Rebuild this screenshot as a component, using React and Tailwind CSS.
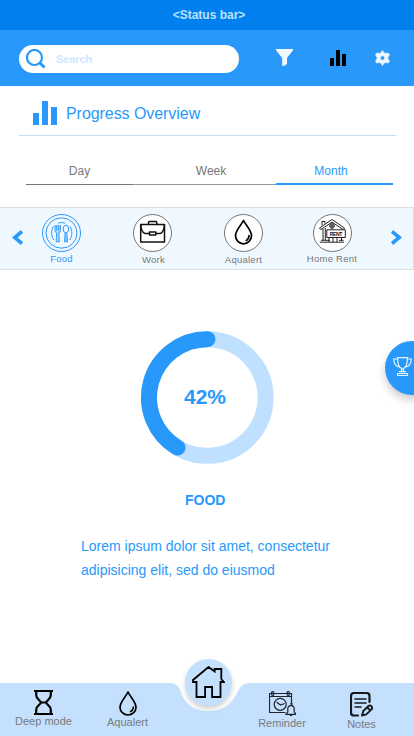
import React from "react";

function BarsIcon({ className }) {
  return (
    <svg className={className} viewBox="0 0 8 8" fill="currentColor" shapeRendering="crispEdges">
      <path d="M0 4h2v4H0zM3 0h2v8H3zM6 2h2v6H6z" />
    </svg>
  );
}

function DropIcon({ className }) {
  return (
    <svg className={className} viewBox="0 0 18 25" fill="none" stroke="#000" strokeWidth="1.700" strokeLinecap="round" strokeLinejoin="round">
      <path d="M9 1C7 5.500 1 11 1 16.200a8 7.800 0 0 0 16 0C17 11 11 5.500 9 1Z" />
      <path d="M14.400 16c-.1 2.300-1.200 3.800-3 4.700" strokeWidth="1.500" />
    </svg>
  );
}

function FoodIcon() {
  return (
    <svg className="h-[38px] w-[39px]" viewBox="0 0 39 38" fill="none" stroke="#2899fb">
      <ellipse cx="19.500" cy="19" rx="19" ry="18.500" />
      <ellipse cx="19.500" cy="19" rx="15.500" ry="15.200" />
      <path d="M11.500 12.500c-2.600 4-2.500 10 .6 13.500M28 12.500c2.600 4 2.500 10-.6 13.500M16 9.200c2.300-.8 4.700-.8 7 0" />
      <path d="M13 11v5.500q0 2 1.700 2.500l-.6 8.800h3.300l-.6-8.800q1.700-.5 1.700-2.500V11M14.800 11v5.500M16.700 11v5.500" fill="#a9d6fd" strokeWidth=".9" />
      <ellipse cx="23.900" cy="15" rx="2.700" ry="3.800" fill="#f0f8ff" />
      <path d="M23.200 18.800l-.8 9h3.200l-.9-9" fill="#8bc8fd" strokeWidth=".9" />
    </svg>
  );
}

function Disc({ children }) {
  return (
    <svg className="h-[38px] w-[39px]" viewBox="0 0 39 38" fill="none">
      <ellipse cx="19.500" cy="19" rx="19" ry="18.500" fill="#fff" stroke="#666" strokeWidth=".9" />
      {children}
    </svg>
  );
}

const WorkArt = (
  <g stroke="#111" strokeWidth="1.500" strokeLinejoin="round">
    <path d="M7.700 10.500h23.800v17.600H7.700zM15.500 10.500V8.600q0-1 1-1h6.300q1 0 1 1v1.900" />
    <path d="M7.700 10.800c.5 5.500 1.800 8.200 4.300 8.700h4.500M31.500 10.800c-.5 5.500-1.800 8.200-4.300 8.700h-4.500" />
    <path d="M16.500 17.900h6.300v3.200h-6.300z" />
  </g>
);

const DropArt = (
  <g stroke="#000" strokeWidth="1.700" strokeLinecap="round" strokeLinejoin="round">
    <path d="M19.500 6.500c-2 4.300-8 9.500-8 15.300a8 8 0 0 0 16 0c0-5.800-6-11-8-15.300Z" />
    <path d="M25 21.700c-.1 2.200-1.100 3.800-2.800 4.700" />
  </g>
);

const RentArt = (
  <g stroke="#222" strokeWidth="1">
    <path d="M6.500 14 19 5.500 31.500 14l-1.200 1.600L19 8.200 7.700 15.600ZM10 15V26M12.300 14V26M28.500 24v3M7 28.200h24M8 26.300h9M16 24v4M20 24v4M24 24v4M26 26.300h4.500M9 11.500V7.500h3v2" />
    <circle cx="19" cy="12" r="2.300" />
    <path d="M19 9.700v4.600M16.700 12h4.600" />
    <path d="M13.800 15.800h18.500v7.700H13.800z" fill="#fff" />
    <text x="23.050" y="21.500" textAnchor="middle" textLength="12.500" fontSize="5" fontWeight="700" fill="#111" stroke="none" fontFamily="Liberation Sans, sans-serif">RENT</text>
  </g>
);

function Category({ label, children, className, labelClass }) {
  return (
    <button className={`flex shrink-0 flex-col items-center ${className}`}>
      {children}
      <span className={`whitespace-nowrap text-[9.5px] leading-[12px] tracking-[0.25px] ${labelClass}`}>{label}</span>
    </button>
  );
}

function NavItem({ label, className, children }) {
  return (
    <button className={`flex shrink-0 flex-col items-center text-[11px] leading-[13px] text-[#777b80] ${className}`}>
      {children}
      <span className="whitespace-nowrap">{label}</span>
    </button>
  );
}

export default function App() {
  return (
    <div className="relative flex h-[736px] w-[414px] flex-col overflow-hidden bg-white font-['Liberation_Sans',Arial,sans-serif]">
      <div className="flex h-[30px] shrink-0 items-center justify-center bg-[#0080ee] pl-1 text-[12px] font-bold text-[#bde0ff]">
        &lt;Status bar&gt;
      </div>

      <header className="flex h-14 shrink-0 items-center bg-[#2899fb] pl-[19px] pt-0.5">
        <div className="flex h-7 w-[220px] items-center rounded-full bg-white pl-[7px]">
          <svg className="-mt-px h-5 w-5" viewBox="0 0 20 20" fill="none" stroke="#2899fb" strokeWidth="2.200">
            <circle cx="8.500" cy="8.500" r="7.500" />
            <path d="m13.500 13.500 5 5" strokeWidth="2.800" />
          </svg>
          <span className="ml-[10px] text-[11px] font-bold tracking-[-0.1px] text-[#cde8ff]">Search</span>
        </div>
        <svg className="mb-[3px] ml-[37px] h-[17px] w-[17px]" viewBox="0 0 17 17" fill="#f0f8ff">
          <path d="M0 0h17v1.300L11 9v5.700Q9.500 17 6.200 17V9L0 1.300Z" />
        </svg>
        <BarsIcon className="mb-[2px] ml-[37px] h-4 w-4 text-black" />
        <svg className="mb-[2px] ml-[29px] h-4 w-[15px]" viewBox="0 0 15 16" fill="#f0f8ff" stroke="#f0f8ff" strokeLinejoin="round" fillRule="evenodd">
          <path d="m7.500.5 1.300 2.200 1.500.8 3.200-.3.900 1.700-1.500 2.100v2l1.500 2.100-.9 1.700-3.200-.3-1.500.8-1.300 2.200-1.300-2.200-1.500-.8-3.200.3-.9-1.700L2.100 9V7L.6 4.900l.9-1.700 3.200.3 1.500-.8ZM7.500 5.700a2.300 2.300 0 1 0 0 4.600 2.300 2.300 0 0 0 0-4.600Z" strokeWidth=".8" />
        </svg>
      </header>

      <div className="ml-[19px] flex h-[50px] w-[377px] shrink-0 items-center border-b border-[#c7def2] pl-[14px] pt-[5px]">
        <BarsIcon className="h-6 w-6 text-[#2899fb]" />
        <h1 className="ml-[9px] mt-0.5 text-[16px] leading-5 tracking-[-0.06px] text-[#2899fb]">Progress Overview</h1>
      </div>

      <div className="ml-[26px] mt-[24px] flex h-[25px] w-[367px] shrink-0 text-[12px] leading-[22px] text-[#777]">
        <button className="flex w-[107px] items-start justify-center border-b border-[#777]">Day</button>
        <button className="flex w-[143px] items-start justify-center border-b border-[#999] pl-[13px]">Week</button>
        <button className="flex w-[117px] items-start justify-center border-b-2 border-[#2899fb] pr-[7px] text-[#2899fb]">Month</button>
      </div>

      <div className="mt-[22px] flex h-[63px] shrink-0 items-start border-y border-r border-[#dcdfe2] bg-[#f0f8ff] pt-1.5">
        <svg className="ml-3 mt-4 h-[15px] w-[11px]" viewBox="0 0 11 15" fill="none" stroke="#2899fb" strokeWidth="3.600"><path d="M10 1.500 2.700 7.500 10 13.500" /></svg>
        <Category label="Food" className="ml-[9px] w-[59px]" labelClass="text-[#2899fb] mt-[1px]"><FoodIcon /></Category>
        <Category label="Work" className="ml-[32px] w-[59px]" labelClass="text-[#777] mt-[2px] pl-0.5"><Disc>{WorkArt}</Disc></Category>
        <Category label="Aqualert" className="ml-[32px] w-[59px]" labelClass="text-[#777] mt-[2px]"><Disc>{DropArt}</Disc></Category>
        <Category label="Home Rent" className="ml-[29px] w-[60px]" labelClass="text-[#777] mt-[1px]"><Disc>{RentArt}</Disc></Category>
        <svg className="ml-[29px] mt-4 h-[15px] w-[11px]" viewBox="0 0 11 15" fill="none" stroke="#2899fb" strokeWidth="3.600"><path d="M1 1.500 8.300 7.500 1 13.500" /></svg>
      </div>

      <main className="flex flex-1 flex-col text-[#2899fb]">
        <div className="ml-[140px] mt-[60px] grid h-[134px] w-[134px] shrink-0 place-items-center">
          <svg className="col-start-1 row-start-1 h-[134px] w-[134px]" viewBox="0 0 134 134" fill="none" strokeWidth="16">
            <circle cx="67.300" cy="67.500" r="58.300" stroke="#bfe0ff" />
            <path d="M67.500 9.200A58.300 58.300 0 0 0 37.500 117.600" stroke="#2899fb" strokeLinecap="round" />
          </svg>
          <span className="col-start-1 row-start-1 -ml-[4px] -mt-px text-[21px] font-bold leading-6">42%</span>
        </div>
        <h2 className="ml-[185px] mt-[28px] text-[14px] font-bold leading-4">FOOD</h2>
        <p className="ml-[81px] mt-[26px] w-[270px] text-[14px] leading-6">
          Lorem ipsum dolor sit amet, consectetur<br />adipisicing elit, sed do eiusmod
        </p>
      </main>

      <button className="absolute left-[385px] top-[341px] h-[54px] w-[54px] rounded-full bg-[#2899fb] pl-[8px] shadow-[0_5px_8px_rgba(0,0,0,0.2)]">
        <svg className="-mt-[3px] h-[19px] w-[19px]" viewBox="0 0 19 19" fill="none" stroke="#e8f5ff" strokeWidth="1.200">
          <path d="M4.500.7h10c0 6-1.200 10.300-5 11.300-3.800-1-5-5.300-5-11.300ZM4.500 2H.7c.2 4.500 2.300 7.600 5.700 8M14.500 2h3.800c-.2 4.500-2.300 7.600-5.700 8M8.500 12v2.700M10.500 12v2.700M6 14.700h7M4.500 16.500h10v2h-10z" />
        </svg>
      </button>

      <footer className="relative h-[53px] shrink-0">
        <svg className="absolute inset-0 h-[53px] w-[414px]" viewBox="0 0 414 53" fill="#c4e0fd">
          <path d="M0 0H168C176 0 179 3 181 9C184 20 193 28 208.500 28C224 28 231 21 237 10C240 4 243 0 250 0H414V53H0Z" />
        </svg>
        <nav className="relative flex h-full items-start">
          <NavItem label="Deep mode" className="ml-[14px] mt-[7px] w-[59px]">
            <svg className="h-[25px] w-[19px]" viewBox="0 0 19 25" fill="none" stroke="#000" strokeWidth="2.200">
              <path d="M0 1h19M0 24h19M2.200 1v4c0 4.800 4.600 5 4.600 7.500S2.200 15.200 2.200 20v4M16.800 1v4c0 4.800-4.600 5-4.600 7.500s4.600 2.700 4.600 7.500v4M6.500 12.500h6" />
            </svg>
          </NavItem>
          <NavItem label="Aqualert" className="ml-[32px] mt-[8px] w-[45px]"><DropIcon className="h-[25px] w-[18px]" /></NavItem>
          <NavItem label="Reminder" className="ml-[107px] mt-[8px] w-[50px]">
            <svg className="mb-px h-[25px] w-[27px]" viewBox="0 0 27 25" fill="none" stroke="#20252b" strokeWidth="1.200">
              <path d="M16.500 21.500H.5v-19h22v10M.5 5.500h22M5 2.500h13" />
              <ellipse cx="3.700" cy="2.500" rx="1.200" ry="2" /><ellipse cx="19.200" cy="2.500" rx="1.200" ry="2" />
              <circle cx="11.200" cy="13.300" r="6" /><path d="m7.500 11 4 3 4-1.500" strokeWidth="1.200" />
              <path d="M17 23.300h10l-1.800-2.500v-3q0-3.200-3.200-3.200t-3.200 3.200v3ZM21 12.800h2v1.700M20.500 23.500q1.500 2 3 0" fill="#c4e0fd" />
            </svg>
          </NavItem>
          <NavItem label="Notes" className="ml-[34px] mt-[9px] w-[41px]">
            <svg className="mb-px h-[25px] w-[23px]" viewBox="0 0 23 25" fill="none" stroke="#171a1d" strokeWidth="2.200" strokeLinecap="round">
              <path d="M8 23.500H4q-3 0-3-3V4q0-3 3-3h12.500q3 0 3 3v6" />
              <path d="M5 7h11M5 11h11M5 15h6" strokeWidth="1.600" />
              <path d="m12 23.500 1.300-4.500 5.200-5q1.700-1 3 .4t0 3l-5.200 5ZM17.300 15.500l2.700 2.700" strokeWidth="1.900" strokeLinejoin="round" />
            </svg>
          </NavItem>
        </nav>
        <button className="absolute left-[185px] top-[-24px] flex h-[47px] w-[47px] items-center justify-center rounded-full bg-[#c4e0fd] shadow-[0_3px_5px_rgba(0,0,0,0.18)]">
          <svg className="-mt-px h-8 w-[33px]" viewBox="0 0 33 32" fill="none" stroke="#000" strokeWidth="1.800">
            <path d="M4.500 16v15h8.600V21h7v10h8.400V16h3.300l-2.500-3V3h-6.600v2.500L16.500 1 1 14v2Z" />
          </svg>
        </button>
      </footer>
    </div>
  );
}
